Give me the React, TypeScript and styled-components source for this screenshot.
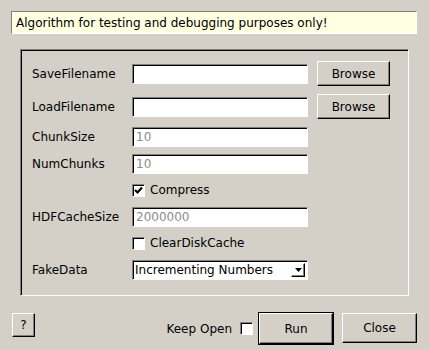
import React, {useState} from 'react';
import styled, {createGlobalStyle, css} from "styled-components";

const GlobalStyle = createGlobalStyle`
  html, body {
    margin: 0;
    padding: 0;
    background: #d4d0c8;
  }

  #root {
    width: 429px;
    height: 350px;
    overflow: hidden;
  }
`

const raised = css`
  border: 1px solid;
  border-color: #fff #000 #000 #fff;
  box-shadow: inset -1px -1px 0 #808080;
`

const sunken = css`
  border: 1px solid;
  border-color: #808080 #fff #fff #808080;
  box-shadow: inset 1px 1px 0 #000;
`

const Window = styled.div`
  width: 429px;
  height: 350px;
  box-sizing: border-box;
  display: flex;
  flex-direction: column;
  background: #d4d0c8;
  font-family: "DejaVu Sans", "Liberation Sans", sans-serif;
  font-size: 12px;
  color: #000;
`

const InfoBar = styled.div`
  margin: 11px 12px 0 11px;
  height: 23px;
  box-sizing: border-box;
  padding-left: 4px;
  display: flex;
  align-items: center;
  background: #ffffe1;
  border: 1px solid;
  border-color: #808080 #fff #fff #808080;
`

const Frame = styled.div`
  margin: 15px 20px 0 20px;
  box-sizing: border-box;
  height: 247px;
  padding: 7px 0 0 11px;
  ${sunken};
  display: grid;
  grid-template-columns: 100px 185px 73px;
  align-content: start;
`

const Cell = styled.div<{ $h: number }>`
  height: ${p => p.$h}px;
  display: flex;
  align-items: center;
`

const Label = styled(Cell)`
  white-space: nowrap;
`

const Entry = styled.div<{ $dim?: boolean }>`
  width: 176px;
  height: 20px;
  box-sizing: border-box;
  background: #fff;
  ${sunken};
  padding-left: 3px;
  display: flex;
  align-items: center;
  color: ${p => p.$dim ? "#8c8c8c" : "#000"};
`

const Button = styled.div<{ $w: number, $h: number }>`
  width: ${p => p.$w}px;
  height: ${p => p.$h}px;
  box-sizing: border-box;
  ${raised};
  display: flex;
  align-items: center;
  justify-content: center;
  cursor: default;
  user-select: none;
`

const DefaultButton = styled.div`
  width: 76px;
  height: 33px;
  box-sizing: border-box;
  border: 1px solid #000;
  display: flex;
`

const CheckRow = styled(Cell)`
  gap: 5px;
`

const Box = styled.div`
  width: 13px;
  height: 13px;
  box-sizing: border-box;
  background: #fff;
  ${sunken};
  display: flex;
  align-items: center;
  justify-content: center;
`

const Select = styled(Entry)`
  justify-content: space-between;
  padding: 0 2px 0 2px;
`

const ArrowBtn = styled.div`
  width: 14px;
  height: 14px;
  box-sizing: border-box;
  ${raised};
  display: flex;
  align-items: center;
  justify-content: center;
`

const BottomBar = styled.div`
  margin-top: 16px;
  padding: 0 12px;
  display: flex;
  align-items: flex-start;
`

const KeepOpen = styled.div`
  margin-left: auto;
  height: 33px;
  display: flex;
  align-items: center;
  gap: 8px;
  margin-right: 5px;
`

const Check = ({on}: { on: boolean }) => (
  <Box>
    {on && (
      <svg width="9" height="9" viewBox="0 0 9 9">
        <path d="M1 4 L3.5 6.5 L8 1.5" stroke="#000" strokeWidth="2.2" fill="none"/>
      </svg>
    )}
  </Box>
)

const App = () => {
  const [compress, setCompress] = useState(true)
  const [clear, setClear] = useState(false)
  const [keepOpen, setKeepOpen] = useState(false)

  return (
    <Window>
      <GlobalStyle/>
      <InfoBar>Algorithm for testing and debugging purposes only!</InfoBar>
      <Frame>
        <Label $h={33}>SaveFilename</Label>
        <Cell $h={33}><Entry/></Cell>
        <Cell $h={33}><Button $w={73} $h={25}>Browse</Button></Cell>

        <Label $h={33}>LoadFilename</Label>
        <Cell $h={33}><Entry/></Cell>
        <Cell $h={33}><Button $w={73} $h={25}>Browse</Button></Cell>

        <Label $h={27}>ChunkSize</Label>
        <Cell $h={27}><Entry $dim>10</Entry></Cell>
        <Cell $h={27}/>

        <Label $h={27}>NumChunks</Label>
        <Cell $h={27}><Entry $dim>10</Entry></Cell>
        <Cell $h={27}/>

        <Cell $h={26}/>
        <CheckRow $h={26} onClick={() => setCompress(!compress)}>
          <Check on={compress}/>Compress
        </CheckRow>
        <Cell $h={26}/>

        <Label $h={27}>HDFCacheSize</Label>
        <Cell $h={27}><Entry $dim>2000000</Entry></Cell>
        <Cell $h={27}/>

        <Cell $h={26}/>
        <CheckRow $h={26} onClick={() => setClear(!clear)}>
          <Check on={clear}/>ClearDiskCache
        </CheckRow>
        <Cell $h={26}/>

        <Label $h={27}>FakeData</Label>
        <Cell $h={27}>
          <Select>
            Incrementing Numbers
            <ArrowBtn>
              <svg width="7" height="4" viewBox="0 0 7 4">
                <path d="M0 0 H7 L3.5 4 Z" fill="#000"/>
              </svg>
            </ArrowBtn>
          </Select>
        </Cell>
        <Cell $h={27}/>
      </Frame>
      <BottomBar>
        <Button $w={23} $h={24} style={{marginTop: 1}}>?</Button>
        <KeepOpen onClick={() => setKeepOpen(!keepOpen)}>
          Keep Open<Check on={keepOpen}/>
        </KeepOpen>
        <DefaultButton>
          <Button $w={74} $h={31}>Run</Button>
        </DefaultButton>
        <Button $w={75} $h={30} style={{marginLeft: 8, marginTop: 1}}>Close</Button>
      </BottomBar>
    </Window>
  );
};

export default App;
